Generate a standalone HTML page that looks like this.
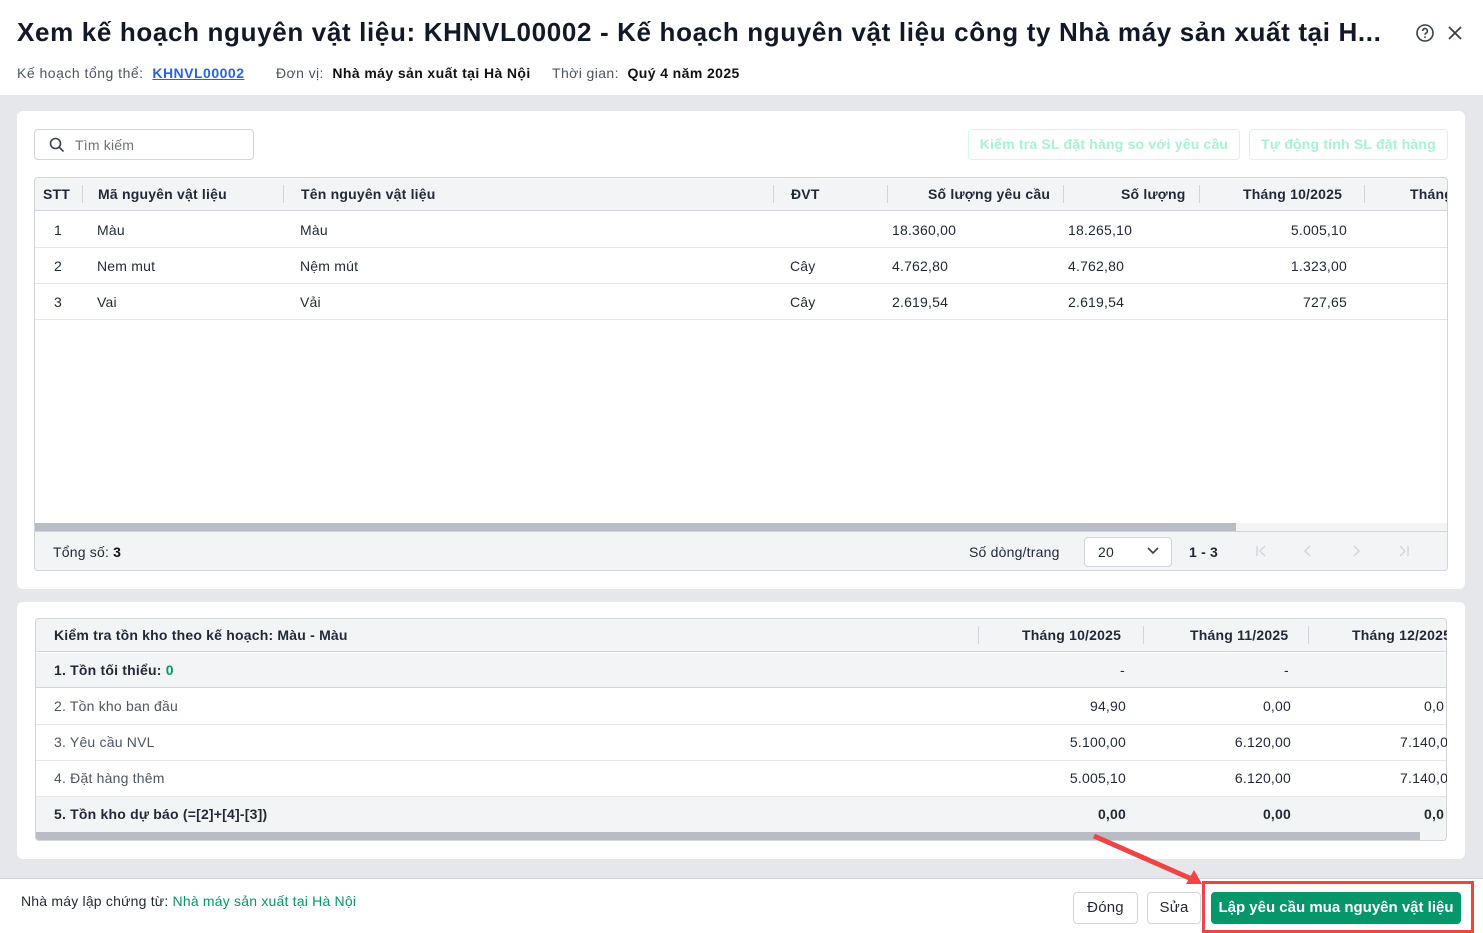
<!DOCTYPE html>
<html><head><meta charset="utf-8">
<style>
*{box-sizing:border-box;margin:0;padding:0}
body{width:1483px;height:933px;overflow:hidden;background:#fff;font-family:"Liberation Sans",Arial,sans-serif;color:#1f2937;font-size:14px;position:relative;letter-spacing:0.2px}
.a{position:absolute;white-space:nowrap}
.b{font-weight:bold}
.gray{color:#4b5563}
.hd{background:#f3f4f6}
.sep{position:absolute;width:1px;background:#d1d5db}
.hl{position:absolute;height:1px;background:#e5e7eb}
</style></head><body>
<div class="a b" style="left:17px;top:17px;font-size:26px;color:#111827;letter-spacing:0.65px">Xem kế hoạch nguyên vật liệu: KHNVL00002 - Kế hoạch nguyên vật liệu công ty Nhà máy sản xuất tại H...</div>
<svg class="a" style="left:1415px;top:23px" width="20" height="20" viewBox="0 0 20 20"><circle cx="10" cy="10" r="8" fill="none" stroke="#374151" stroke-width="1.6"/><path d="M7.6 8a2.4 2.4 0 1 1 3.4 2.1c-.7.4-1 .8-1 1.6" fill="none" stroke="#374151" stroke-width="1.6"/><circle cx="10" cy="14.2" r=".9" fill="#374151"/></svg>
<svg class="a" style="left:1447px;top:25px" width="16" height="16" viewBox="0 0 16 16"><path d="M2 2L14 14M14 2L2 14" stroke="#374151" stroke-width="1.8"/></svg>
<div class="a" style="left:17px;top:65px;letter-spacing:0.5px"><span class="gray">Kế hoạch tổng thể:</span>&nbsp; <span class="b" style="color:#2563eb;text-decoration:underline">KHNVL00002</span></div>
<div class="a" style="left:276px;top:65px;letter-spacing:0.4px"><span class="gray">Đơn vị:</span>&nbsp; <span class="b" style="color:#111">Nhà máy sản xuất tại Hà Nội</span></div>
<div class="a" style="left:552px;top:65px;letter-spacing:0.4px"><span class="gray">Thời gian:</span>&nbsp; <span class="b" style="color:#111">Quý 4 năm 2025</span></div>

<div class="a" style="left:0;top:95px;width:1483px;height:783px;background:#e5e7eb"></div>
<div class="a" style="left:17px;top:111px;width:1448px;height:478px;background:#fff;border-radius:6px"></div>
<div class="a" style="left:17px;top:602px;width:1448px;height:257px;background:#fff;border-radius:6px"></div>

<div class="a" style="left:34px;top:129px;width:220px;height:31px;border:1px solid #d1d5db;border-radius:4px"></div>
<svg class="a" style="left:49px;top:137px" width="16" height="16" viewBox="0 0 16 16"><circle cx="6.5" cy="6.5" r="5" fill="none" stroke="#374151" stroke-width="1.6"/><path d="M10.2 10.2L14.5 14.5" stroke="#374151" stroke-width="1.6"/></svg>
<div class="a" style="left:75px;top:137px;color:#6b7280">Tìm kiếm</div>
<div class="a" style="left:968px;top:129px;width:272px;height:31px;border:1px solid #d1fae5;border-radius:4px;color:#a7f3d0;font-weight:bold;text-align:center;line-height:29px">Kiểm tra SL đặt hàng so với yêu cầu</div>
<div class="a" style="left:1249px;top:129px;width:199px;height:31px;border:1px solid #d1fae5;border-radius:4px;color:#a7f3d0;font-weight:bold;text-align:center;line-height:29px">Tự động tính SL đặt hàng</div>

<div class="a" style="left:34px;top:177px;width:1414px;height:394px;border:1px solid #d1d5db;border-radius:4px;overflow:hidden">
 <div class="a hd" style="left:0;top:0;width:1414px;height:33px;border-bottom:1px solid #d1d5db"></div>
 <div class="hl" style="left:0;top:69px;width:1414px"></div>
 <div class="hl" style="left:0;top:105px;width:1414px"></div>
 <div class="hl" style="left:0;top:141px;width:1414px"></div>
 <div class="a" style="left:0;top:345px;width:1414px;height:8px;background:#f3f4f6"></div>
 <div class="a" style="left:0;top:345px;width:1201px;height:8px;background:#b8bcc4"></div>
 <div class="a hd" style="left:0;top:353px;width:1414px;height:41px;border-top:1px solid #d1d5db"></div>
</div>
<div class="sep" style="left:82px;top:185px;height:18px"></div>
<div class="sep" style="left:283px;top:185px;height:18px"></div>
<div class="sep" style="left:773px;top:185px;height:18px"></div>
<div class="sep" style="left:887px;top:185px;height:18px"></div>
<div class="sep" style="left:1063px;top:185px;height:18px"></div>
<div class="sep" style="left:1199px;top:185px;height:18px"></div>
<div class="sep" style="left:1364px;top:185px;height:18px"></div>
<div class="a b" style="left:43px;top:186px">STT</div>
<div class="a b" style="left:98px;top:186px">Mã nguyên vật liệu</div>
<div class="a b" style="left:301px;top:186px">Tên nguyên vật liệu</div>
<div class="a b" style="left:791px;top:186px">ĐVT</div>
<div class="a b" style="left:928px;top:186px">Số lượng yêu cầu</div>
<div class="a b" style="left:1121px;top:186px">Số lượng</div>
<div class="a b" style="left:1243px;top:186px">Tháng 10/2025</div>
<div class="a b" style="left:1410px;top:186px;width:37px;overflow:hidden">Tháng</div>

<div class="a" style="left:54px;top:222px">1</div><div class="a" style="left:97px;top:222px">Màu</div><div class="a" style="left:300px;top:222px">Màu</div><div class="a" style="left:892px;top:222px">18.360,00</div><div class="a" style="left:1068px;top:222px">18.265,10</div><div class="a" style="left:1247px;top:222px;width:100px;text-align:right">5.005,10</div>
<div class="a" style="left:54px;top:258px">2</div><div class="a" style="left:97px;top:258px">Nem mut</div><div class="a" style="left:300px;top:258px">Nệm mút</div><div class="a" style="left:790px;top:258px">Cây</div><div class="a" style="left:892px;top:258px">4.762,80</div><div class="a" style="left:1068px;top:258px">4.762,80</div><div class="a" style="left:1247px;top:258px;width:100px;text-align:right">1.323,00</div>
<div class="a" style="left:54px;top:294px">3</div><div class="a" style="left:97px;top:294px">Vai</div><div class="a" style="left:300px;top:294px">Vải</div><div class="a" style="left:790px;top:294px">Cây</div><div class="a" style="left:892px;top:294px">2.619,54</div><div class="a" style="left:1068px;top:294px">2.619,54</div><div class="a" style="left:1247px;top:294px;width:100px;text-align:right">727,65</div>

<div class="a" style="left:53px;top:544px">Tổng số: <b style="color:#111">3</b></div>
<div class="a" style="left:969px;top:544px">Số dòng/trang</div>
<div class="a" style="left:1084px;top:537px;width:88px;height:30px;border:1px solid #d1d5db;border-radius:4px;background:#fff"></div>
<div class="a" style="left:1098px;top:544px">20</div>
<svg class="a" style="left:1146px;top:546px" width="14" height="10" viewBox="0 0 14 10"><path d="M2 2L7 7L12 2" fill="none" stroke="#374151" stroke-width="1.6"/></svg>
<div class="a b" style="left:1189px;top:544px">1 - 3</div>
<svg class="a" style="left:1254px;top:544px" width="14" height="14" viewBox="0 0 14 14"><path d="M3 2V12M11 2L6 7L11 12" fill="none" stroke="#d1d5db" stroke-width="1.4"/></svg>
<svg class="a" style="left:1301px;top:544px" width="14" height="14" viewBox="0 0 14 14"><path d="M9 2L4 7L9 12" fill="none" stroke="#d1d5db" stroke-width="1.4"/></svg>
<svg class="a" style="left:1349px;top:544px" width="14" height="14" viewBox="0 0 14 14"><path d="M5 2L10 7L5 12" fill="none" stroke="#d1d5db" stroke-width="1.4"/></svg>
<svg class="a" style="left:1397px;top:544px" width="14" height="14" viewBox="0 0 14 14"><path d="M3 2L8 7L3 12M11 2V12" fill="none" stroke="#d1d5db" stroke-width="1.4"/></svg>

<div class="a" style="left:35px;top:618px;width:1412px;height:223px;border:1px solid #d1d5db;border-radius:4px;overflow:hidden">
 <div class="a hd" style="left:0;top:0;width:1412px;height:33px;border-bottom:1px solid #d1d5db"></div>
 <div class="a hd" style="left:0;top:34px;width:1412px;height:35px;border-bottom:1px solid #d1d5db"></div>
 <div class="hl" style="left:0;top:105px;width:1412px"></div>
 <div class="hl" style="left:0;top:141px;width:1412px"></div>
 <div class="a hd" style="left:0;top:177px;width:1412px;height:36px;border-top:1px solid #e5e7eb"></div>
 <div class="a" style="left:0;top:213px;width:1412px;height:10px;background:#f3f4f6"></div>
 <div class="a" style="left:0;top:213px;width:1384px;height:10px;background:#b8bcc4"></div>
</div>
<div class="sep" style="left:978px;top:626px;height:18px"></div>
<div class="sep" style="left:1143px;top:626px;height:18px"></div>
<div class="sep" style="left:1308px;top:626px;height:18px"></div>
<div class="a b" style="left:54px;top:627px">Kiểm tra tồn kho theo kế hoạch: Màu - Màu</div>
<div class="a b" style="left:1022px;top:627px">Tháng 10/2025</div>
<div class="a b" style="left:1190px;top:627px">Tháng 11/2025</div>
<div class="a b" style="left:1352px;top:627px;width:95px;overflow:hidden">Tháng 12/2025</div>

<div class="a b" style="left:54px;top:662px">1. Tồn tối thiểu: <span style="color:#059669">0</span></div>
<div class="a" style="left:1120px;top:662px">-</div><div class="a" style="left:1284px;top:662px">-</div>
<div class="a gray" style="left:54px;top:698px">2. Tồn kho ban đầu</div>
<div class="a" style="left:1026px;top:698px;width:100px;text-align:right">94,90</div><div class="a" style="left:1191px;top:698px;width:100px;text-align:right">0,00</div><div class="a" style="left:1424px;top:698px">0,0</div>
<div class="a gray" style="left:54px;top:734px">3. Yêu cầu NVL</div>
<div class="a" style="left:1026px;top:734px;width:100px;text-align:right">5.100,00</div><div class="a" style="left:1191px;top:734px;width:100px;text-align:right">6.120,00</div><div class="a" style="left:1400px;top:734px;width:47px;overflow:hidden">7.140,0</div>
<div class="a gray" style="left:54px;top:770px">4. Đặt hàng thêm</div>
<div class="a" style="left:1026px;top:770px;width:100px;text-align:right">5.005,10</div><div class="a" style="left:1191px;top:770px;width:100px;text-align:right">6.120,00</div><div class="a" style="left:1400px;top:770px;width:47px;overflow:hidden">7.140,0</div>
<div class="a b" style="left:54px;top:806px">5. Tồn kho dự báo (=[2]+[4]-[3])</div>
<div class="a b" style="left:1026px;top:806px;width:100px;text-align:right">0,00</div><div class="a b" style="left:1191px;top:806px;width:100px;text-align:right">0,00</div><div class="a b" style="left:1424px;top:806px">0,0</div>

<div class="a" style="left:0;top:878px;width:1483px;height:1px;background:#d1d5db"></div>
<div class="a" style="left:21px;top:893px">Nhà máy lập chứng từ: <span style="color:#059669">Nhà máy sản xuất tại Hà Nội</span></div>
<div class="a" style="left:1073px;top:892px;width:65px;height:32px;border:1px solid #d1d5db;border-radius:4px;text-align:center;line-height:30px;font-size:15px">Đóng</div>
<div class="a" style="left:1147px;top:892px;width:54px;height:32px;border:1px solid #d1d5db;border-radius:4px;text-align:center;line-height:30px;font-size:15px">Sửa</div>
<div class="a" style="left:1211px;top:892px;width:250px;height:32px;background:#059669;border-radius:4px;color:#fff;font-weight:bold;text-align:center;line-height:32px;font-size:15px;letter-spacing:0">Lập yêu cầu mua nguyên vật liệu</div>
<div class="a" style="left:1202px;top:881px;width:272px;height:52px;border:3px solid #ef4444"></div>
<svg class="a" style="left:1090px;top:832px" width="120" height="56" viewBox="0 0 120 56"><path d="M4 4L104 48" stroke="#ef4444" stroke-width="5"/><path d="M112 52L96 52L104 38Z" fill="#ef4444"/></svg>
</body></html>
